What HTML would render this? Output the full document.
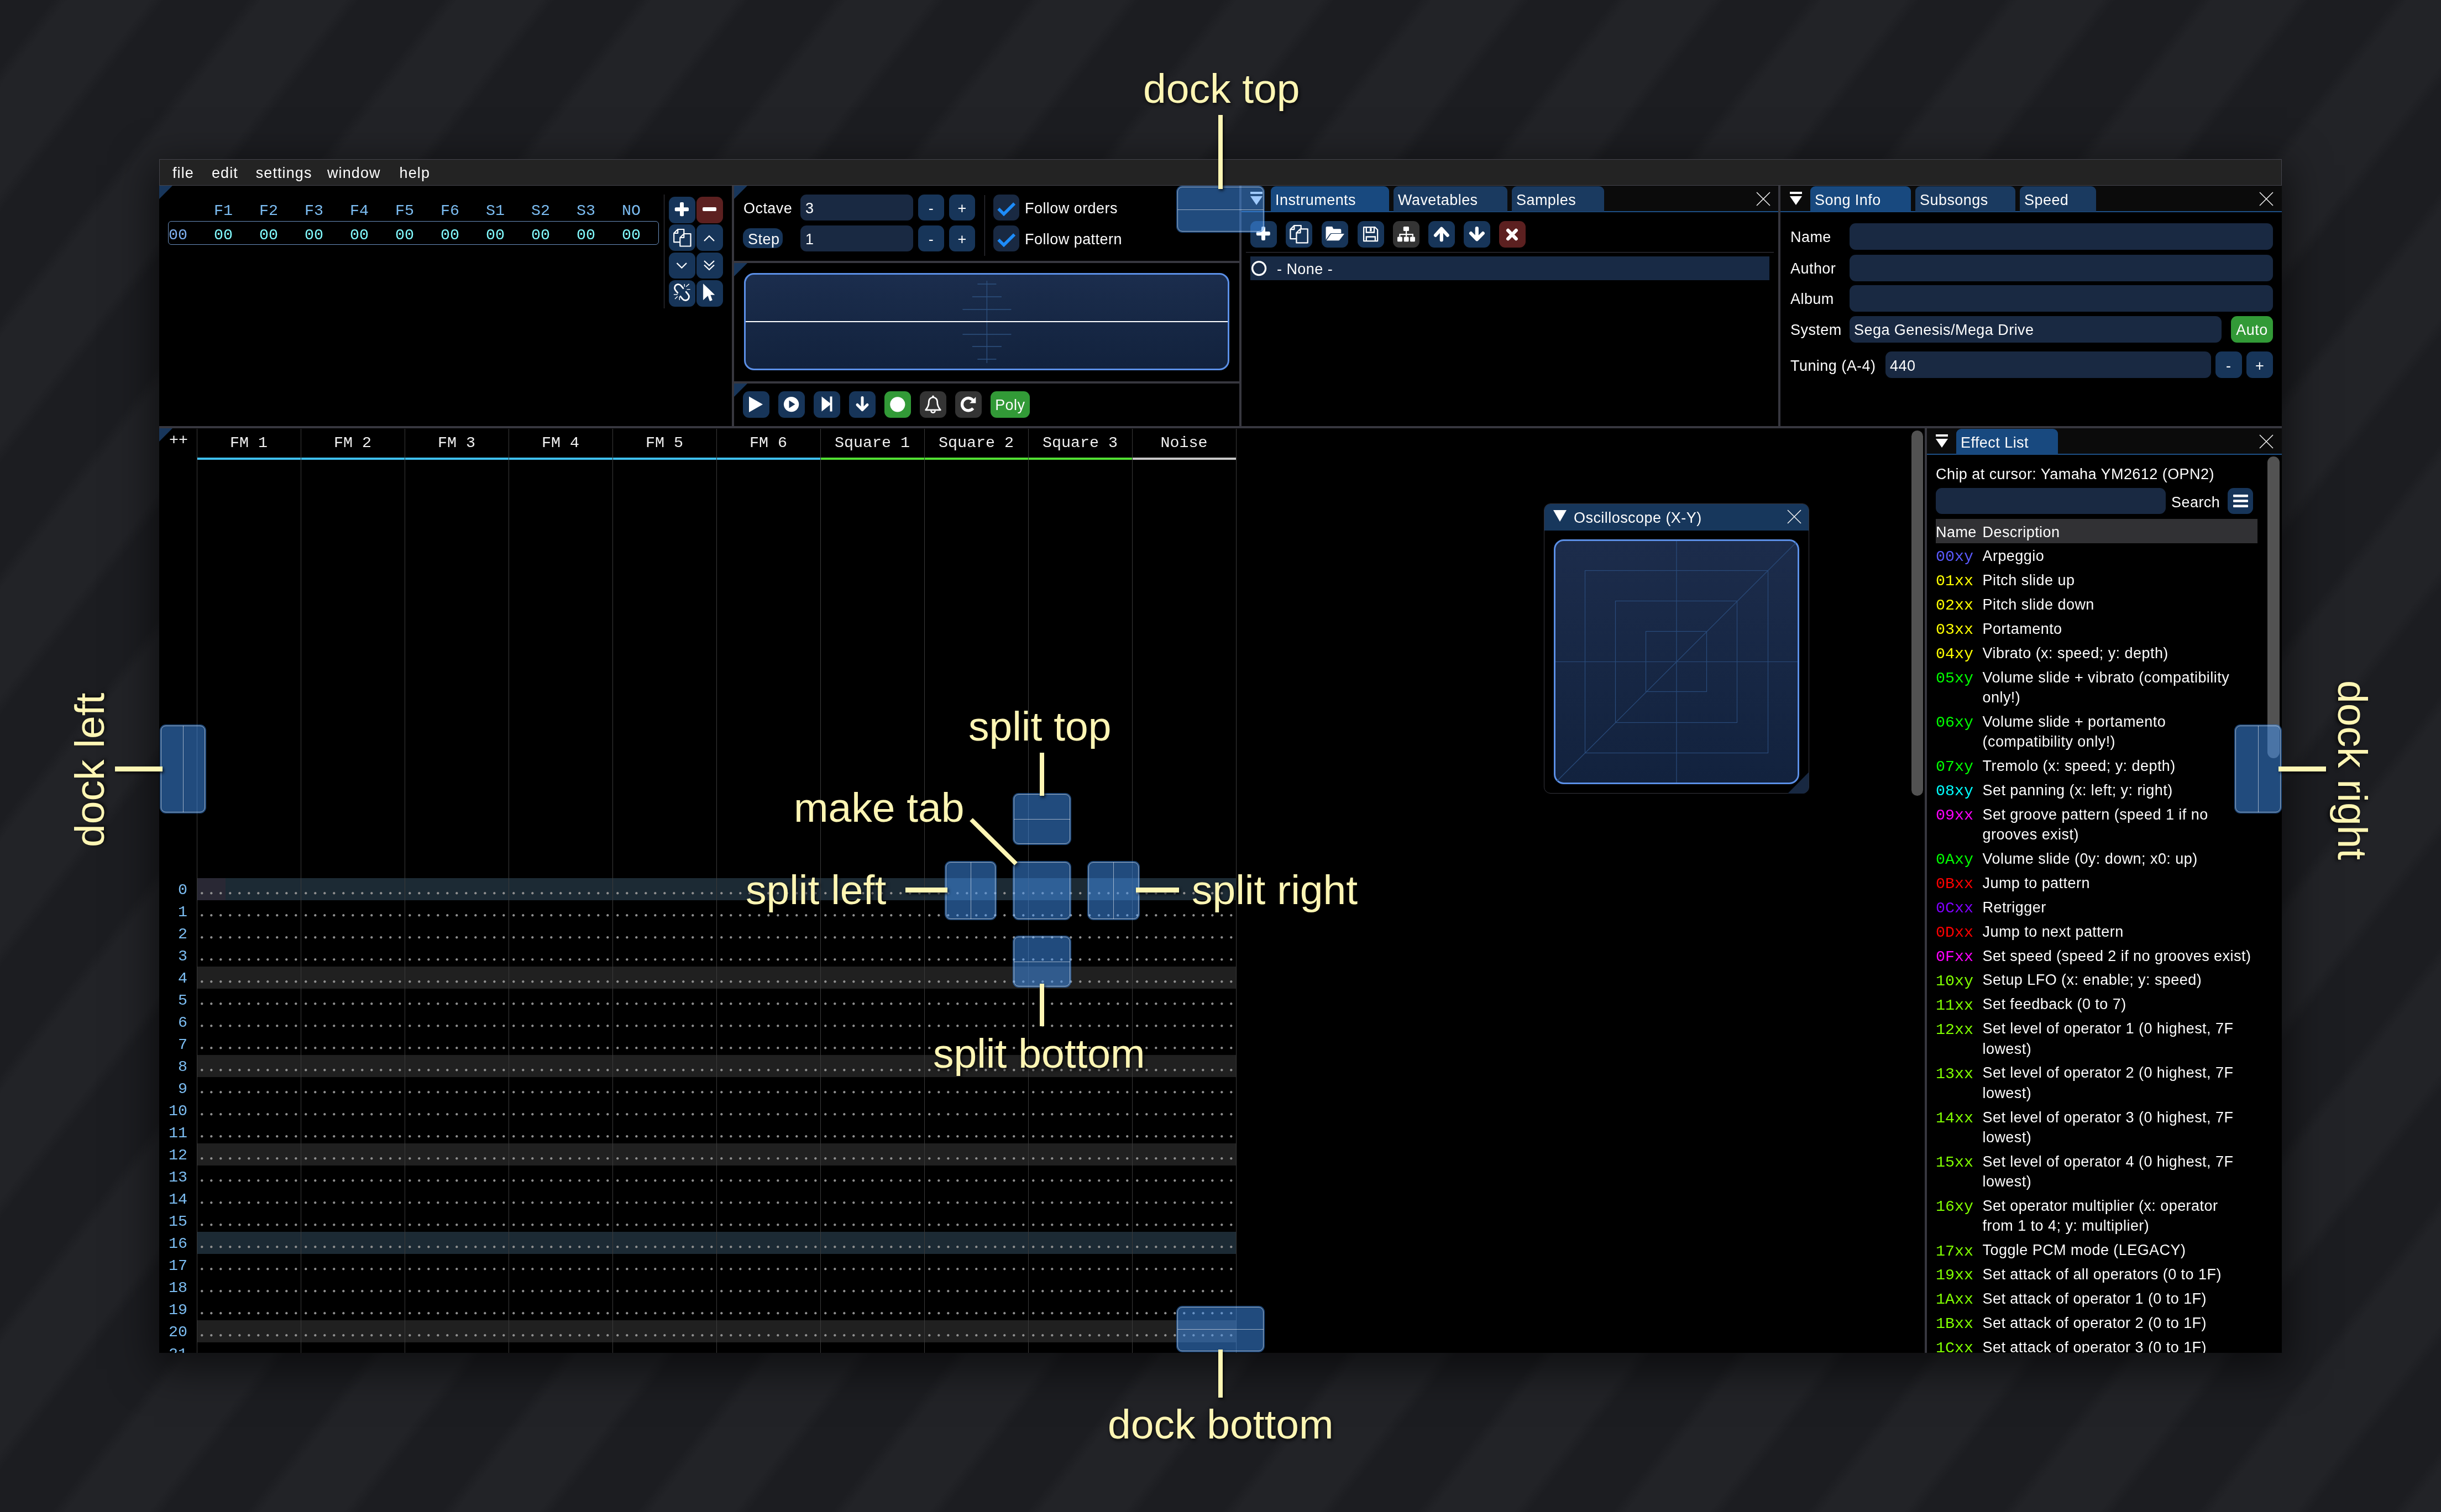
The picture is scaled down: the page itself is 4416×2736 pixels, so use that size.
<!DOCTYPE html><html><head><meta charset="utf-8"><style>
html,body{margin:0;padding:0;width:4416px;height:2736px;overflow:hidden;}
body{position:relative;background:#1e1f23;}
#root{position:absolute;left:0;top:0;width:4416px;height:2736px;will-change:transform;}
</style></head><body><div id="root">
<div style="position:absolute;left:0;top:0;width:4416px;height:2736px;background:repeating-linear-gradient(127.77deg,#1c1d21 0px,#1c1d21 74.4px,#222327 96.4px,#222327 213.5px,#1c1d21 235.5px,#1c1d21 279.0px);"></div>
<div style="position:absolute;left:288px;top:288px;width:3840px;height:2160px;background:#000;box-shadow:0 20px 70px 10px rgba(0,0,0,0.55);"></div>
<div style="position:absolute;left:288px;top:288px;width:3840px;height:48px;background:#232323;box-sizing:border-box;border:1px solid #44444c;border-bottom:1px solid #44444c;"></div>
<div style="position:absolute;left:312px;top:300.05px;font-family:'Liberation Sans', sans-serif;font-size:27px;line-height:27px;color:#fcfcfc;white-space:pre;letter-spacing:1.1px;">file</div>
<div style="position:absolute;left:383px;top:300.05px;font-family:'Liberation Sans', sans-serif;font-size:27px;line-height:27px;color:#fcfcfc;white-space:pre;letter-spacing:1.1px;">edit</div>
<div style="position:absolute;left:462.7px;top:300.05px;font-family:'Liberation Sans', sans-serif;font-size:27px;line-height:27px;color:#fcfcfc;white-space:pre;letter-spacing:1.1px;">settings</div>
<div style="position:absolute;left:592px;top:300.05px;font-family:'Liberation Sans', sans-serif;font-size:27px;line-height:27px;color:#fcfcfc;white-space:pre;letter-spacing:1.1px;">window</div>
<div style="position:absolute;left:722.6px;top:300.05px;font-family:'Liberation Sans', sans-serif;font-size:27px;line-height:27px;color:#fcfcfc;white-space:pre;letter-spacing:1.1px;">help</div>
<div style="position:absolute;left:288px;top:771px;width:3840px;height:4px;background:#37373f;"></div>
<div style="position:absolute;left:1324px;top:336px;width:4px;height:435px;background:#37373f;"></div>
<div style="position:absolute;left:2242px;top:336px;width:4px;height:435px;background:#37373f;"></div>
<div style="position:absolute;left:3217px;top:336px;width:4px;height:435px;background:#37373f;"></div>
<div style="position:absolute;left:1328px;top:472px;width:914px;height:4px;background:#37373f;"></div>
<div style="position:absolute;left:1328px;top:690px;width:914px;height:4px;background:#37373f;"></div>
<div style="position:absolute;left:3482px;top:775px;width:4px;height:1673px;background:#37373f;"></div>
<svg style="position:absolute;left:288px;top:336px;" width="24" height="24" viewBox="0 0 24 24"><path d="M0 0H24L0 24Z" fill="#18365b"/></svg>
<svg style="position:absolute;left:1328px;top:336px;" width="24" height="24" viewBox="0 0 24 24"><path d="M0 0H24L0 24Z" fill="#18365b"/></svg>
<svg style="position:absolute;left:1328px;top:476px;" width="24" height="24" viewBox="0 0 24 24"><path d="M0 0H24L0 24Z" fill="#18365b"/></svg>
<svg style="position:absolute;left:1328px;top:694px;" width="24" height="24" viewBox="0 0 24 24"><path d="M0 0H24L0 24Z" fill="#18365b"/></svg>
<svg style="position:absolute;left:288px;top:775px;" width="24" height="24" viewBox="0 0 24 24"><path d="M0 0H24L0 24Z" fill="#18365b"/></svg>
<div style="position:absolute;left:304.4px;top:400.3px;width:888px;height:43px;box-sizing:border-box;border:1.5px solid #6a8fbf;border-radius:6px;"></div>
<div style="position:absolute;left:305px;top:411.70px;font-family:'Liberation Mono', monospace;font-size:28.33px;line-height:28.33px;color:#7fb0f0;white-space:pre;">00</div>
<div style="position:absolute;left:387px;top:367.70px;font-family:'Liberation Mono', monospace;font-size:28.33px;line-height:28.33px;color:#7cbdf2;white-space:pre;">F1</div>
<div style="position:absolute;left:387px;top:411.70px;font-family:'Liberation Mono', monospace;font-size:28.33px;line-height:28.33px;color:#82fbff;white-space:pre;">00</div>
<div style="position:absolute;left:469px;top:367.70px;font-family:'Liberation Mono', monospace;font-size:28.33px;line-height:28.33px;color:#7cbdf2;white-space:pre;">F2</div>
<div style="position:absolute;left:469px;top:411.70px;font-family:'Liberation Mono', monospace;font-size:28.33px;line-height:28.33px;color:#82fbff;white-space:pre;">00</div>
<div style="position:absolute;left:551px;top:367.70px;font-family:'Liberation Mono', monospace;font-size:28.33px;line-height:28.33px;color:#7cbdf2;white-space:pre;">F3</div>
<div style="position:absolute;left:551px;top:411.70px;font-family:'Liberation Mono', monospace;font-size:28.33px;line-height:28.33px;color:#82fbff;white-space:pre;">00</div>
<div style="position:absolute;left:633px;top:367.70px;font-family:'Liberation Mono', monospace;font-size:28.33px;line-height:28.33px;color:#7cbdf2;white-space:pre;">F4</div>
<div style="position:absolute;left:633px;top:411.70px;font-family:'Liberation Mono', monospace;font-size:28.33px;line-height:28.33px;color:#82fbff;white-space:pre;">00</div>
<div style="position:absolute;left:715px;top:367.70px;font-family:'Liberation Mono', monospace;font-size:28.33px;line-height:28.33px;color:#7cbdf2;white-space:pre;">F5</div>
<div style="position:absolute;left:715px;top:411.70px;font-family:'Liberation Mono', monospace;font-size:28.33px;line-height:28.33px;color:#82fbff;white-space:pre;">00</div>
<div style="position:absolute;left:797px;top:367.70px;font-family:'Liberation Mono', monospace;font-size:28.33px;line-height:28.33px;color:#7cbdf2;white-space:pre;">F6</div>
<div style="position:absolute;left:797px;top:411.70px;font-family:'Liberation Mono', monospace;font-size:28.33px;line-height:28.33px;color:#82fbff;white-space:pre;">00</div>
<div style="position:absolute;left:879px;top:367.70px;font-family:'Liberation Mono', monospace;font-size:28.33px;line-height:28.33px;color:#7cbdf2;white-space:pre;">S1</div>
<div style="position:absolute;left:879px;top:411.70px;font-family:'Liberation Mono', monospace;font-size:28.33px;line-height:28.33px;color:#82fbff;white-space:pre;">00</div>
<div style="position:absolute;left:961px;top:367.70px;font-family:'Liberation Mono', monospace;font-size:28.33px;line-height:28.33px;color:#7cbdf2;white-space:pre;">S2</div>
<div style="position:absolute;left:961px;top:411.70px;font-family:'Liberation Mono', monospace;font-size:28.33px;line-height:28.33px;color:#82fbff;white-space:pre;">00</div>
<div style="position:absolute;left:1043px;top:367.70px;font-family:'Liberation Mono', monospace;font-size:28.33px;line-height:28.33px;color:#7cbdf2;white-space:pre;">S3</div>
<div style="position:absolute;left:1043px;top:411.70px;font-family:'Liberation Mono', monospace;font-size:28.33px;line-height:28.33px;color:#82fbff;white-space:pre;">00</div>
<div style="position:absolute;left:1125px;top:367.70px;font-family:'Liberation Mono', monospace;font-size:28.33px;line-height:28.33px;color:#7cbdf2;white-space:pre;">NO</div>
<div style="position:absolute;left:1125px;top:411.70px;font-family:'Liberation Mono', monospace;font-size:28.33px;line-height:28.33px;color:#82fbff;white-space:pre;">00</div>
<div style="position:absolute;left:1201px;top:352px;width:1px;height:206px;background:#3c3c44;"></div>
<div style="position:absolute;left:1210px;top:356px;width:47.5px;height:47.5px;background:#173559;border-radius:11px;"></div>
<div style="position:absolute;left:1260px;top:356px;width:47.5px;height:47.5px;background:#5c2020;border-radius:11px;"></div>
<div style="position:absolute;left:1210px;top:406px;width:47.5px;height:47.5px;background:#173559;border-radius:11px;"></div>
<div style="position:absolute;left:1260px;top:406px;width:47.5px;height:47.5px;background:#173559;border-radius:11px;"></div>
<div style="position:absolute;left:1210px;top:456.5px;width:47.5px;height:47.5px;background:#173559;border-radius:11px;"></div>
<div style="position:absolute;left:1260px;top:456.5px;width:47.5px;height:47.5px;background:#173559;border-radius:11px;"></div>
<div style="position:absolute;left:1210px;top:507px;width:47.5px;height:47.5px;background:#173559;border-radius:11px;"></div>
<div style="position:absolute;left:1260px;top:507px;width:47.5px;height:47.5px;background:#173559;border-radius:11px;"></div>
<svg style="position:absolute;left:1210px;top:356px;" width="48" height="48" viewBox="0 0 48 48"><rect x="10.8" y="19.2" width="25.2" height="7" rx="2" fill="#fff"/><rect x="20" y="10" width="7" height="25.2" rx="2" fill="#fff"/></svg>
<svg style="position:absolute;left:1260px;top:356px;" width="48" height="48" viewBox="0 0 48 48"><rect x="11" y="19" width="25" height="7" rx="2" fill="#fff"/></svg>
<svg style="position:absolute;left:1210px;top:406px;" width="48" height="48" viewBox="0 0 48 48"><path d="M9.2 16L16.2 9H27.3V17 M20.3 32.2H9.2V16H16.2V9" fill="none" stroke="#fff" stroke-width="2.2" stroke-linejoin="round"/><path d="M20.3 24L27.3 17H39.5V39.5H20.3Z M20.3 24H27.3V17" fill="none" stroke="#fff" stroke-width="2.2" stroke-linejoin="round"/></svg>
<svg style="position:absolute;left:1260px;top:406px;" width="48" height="48" viewBox="0 0 48 48"><path d="M14 30L23 21L32 30" fill="none" stroke="#fff" stroke-width="2.2"/></svg>
<svg style="position:absolute;left:1210px;top:456.5px;" width="48" height="48" viewBox="0 0 48 48"><path d="M14.5 19L23.3 27.8L32 19" fill="none" stroke="#fff" stroke-width="2.2"/></svg>
<svg style="position:absolute;left:1260px;top:456.5px;" width="48" height="48" viewBox="0 0 48 48"><path d="M14 15L23 23.5L32 15 M14 22.5L23 31L32 22.5" fill="none" stroke="#fff" stroke-width="2.2"/></svg>
<svg style="position:absolute;left:1210px;top:507px;" width="48" height="48" viewBox="0 0 48 48"><path d="M15.85 22.9L11.95 18.1A6.5 6.5 0 0 1 22.05 9.9L25.95 14.7 M31.15 21.1L35.05 25.9A6.5 6.5 0 0 1 24.95 34.1L21.05 29.3" fill="none" stroke="#fff" stroke-width="2.8" stroke-linecap="round"/><path d="M28.3 6.9V11.8 M31.1 11.8L36.7 6.9 M32.5 16.6H38.7 M8.9 26H15.8 M11 34L15.8 29.2 M19.3 29.7V36" stroke="#fff" stroke-width="1.4"/></svg>
<svg style="position:absolute;left:1260px;top:507px;" width="48" height="48" viewBox="0 0 48 48"><path d="M12.4 6.9V35.4L20.7 27.7L24.2 37.4L28.3 36L24.9 26.3H32.5Z" fill="#fff" stroke="#fff" stroke-width="0.8" stroke-linejoin="round"/></svg>
<div style="position:absolute;left:1345px;top:364.35px;font-family:'Liberation Sans', sans-serif;font-size:27px;line-height:27px;color:#fcfcfc;white-space:pre;letter-spacing:0.45px;">Octave</div>
<div style="position:absolute;left:1448px;top:352px;width:204px;height:47px;background:#192942;border-radius:11px;"></div>
<div style="position:absolute;left:1457px;top:364.35px;font-family:'Liberation Sans', sans-serif;font-size:27px;line-height:27px;color:#fcfcfc;white-space:pre;letter-spacing:0.45px;">3</div>
<div style="position:absolute;left:1661px;top:352px;width:47px;height:47px;background:#173559;border-radius:11px;"></div>
<div style="position:absolute;left:1184.5px;width:1000px;text-align:center;top:364.35px;font-family:'Liberation Sans', sans-serif;font-size:27px;line-height:27px;color:#fcfcfc;white-space:pre;letter-spacing:0.45px;">-</div>
<div style="position:absolute;left:1717px;top:352px;width:47px;height:47px;background:#173559;border-radius:11px;"></div>
<div style="position:absolute;left:1240.5px;width:1000px;text-align:center;top:364.35px;font-family:'Liberation Sans', sans-serif;font-size:27px;line-height:27px;color:#fcfcfc;white-space:pre;letter-spacing:0.45px;">+</div>
<div style="position:absolute;left:1344px;top:413px;width:72px;height:36px;background:#173559;border-radius:14px;"></div>
<div style="position:absolute;left:1353px;top:420.45px;font-family:'Liberation Sans', sans-serif;font-size:27px;line-height:27px;color:#fcfcfc;white-space:pre;letter-spacing:0.45px;">Step</div>
<div style="position:absolute;left:1448px;top:408px;width:204px;height:47px;background:#192942;border-radius:11px;"></div>
<div style="position:absolute;left:1457px;top:420.45px;font-family:'Liberation Sans', sans-serif;font-size:27px;line-height:27px;color:#fcfcfc;white-space:pre;letter-spacing:0.45px;">1</div>
<div style="position:absolute;left:1661px;top:408px;width:47px;height:47px;background:#173559;border-radius:11px;"></div>
<div style="position:absolute;left:1184.5px;width:1000px;text-align:center;top:420.45px;font-family:'Liberation Sans', sans-serif;font-size:27px;line-height:27px;color:#fcfcfc;white-space:pre;letter-spacing:0.45px;">-</div>
<div style="position:absolute;left:1717px;top:408px;width:47px;height:47px;background:#173559;border-radius:11px;"></div>
<div style="position:absolute;left:1240.5px;width:1000px;text-align:center;top:420.45px;font-family:'Liberation Sans', sans-serif;font-size:27px;line-height:27px;color:#fcfcfc;white-space:pre;letter-spacing:0.45px;">+</div>
<div style="position:absolute;left:1781px;top:353px;width:1px;height:110px;background:#3c3c44;"></div>
<div style="position:absolute;left:1797px;top:352px;width:47px;height:47px;background:#192942;border-radius:11px;"></div>
<svg style="position:absolute;left:1797px;top:352px;" width="47" height="47" viewBox="0 0 47 47"><path d="M9.3 25.8L19 35.3L38.2 16.2" fill="none" stroke="#1d8cfa" stroke-width="5.6" stroke-linecap="butt"/></svg>
<div style="position:absolute;left:1854px;top:364.35px;font-family:'Liberation Sans', sans-serif;font-size:27px;line-height:27px;color:#fcfcfc;white-space:pre;letter-spacing:0.45px;">Follow orders</div>
<div style="position:absolute;left:1797px;top:408px;width:47px;height:47px;background:#192942;border-radius:11px;"></div>
<svg style="position:absolute;left:1797px;top:408px;" width="47" height="47" viewBox="0 0 47 47"><path d="M9.3 25.8L19 35.3L38.2 16.2" fill="none" stroke="#1d8cfa" stroke-width="5.6" stroke-linecap="butt"/></svg>
<div style="position:absolute;left:1854px;top:420.35px;font-family:'Liberation Sans', sans-serif;font-size:27px;line-height:27px;color:#fcfcfc;white-space:pre;letter-spacing:0.45px;">Follow pattern</div>
<div style="position:absolute;left:1346px;top:494px;width:878px;height:176px;box-sizing:border-box;border:3px solid #5b8fe6;border-radius:18px;background:linear-gradient(#1b2d4d,#12223d);"></div>
<svg style="position:absolute;left:1346px;top:494px;" width="878" height="176" viewBox="0 0 878 176"><g stroke="#2e5180" stroke-width="1.3"><path d="M439.4 14V163"/><path d="M422.4 20h34M412.9 43h53M395.4 66h88M395.4 111h88M412.9 133h53M422.4 156h34"/></g><path d="M3 88H875" stroke="#fff" stroke-width="2"/></svg>
<div style="position:absolute;left:1344px;top:708px;width:47.5px;height:47.5px;background:#173559;border-radius:11px;"></div>
<div style="position:absolute;left:1408px;top:708px;width:47.5px;height:47.5px;background:#173559;border-radius:11px;"></div>
<div style="position:absolute;left:1472.4px;top:708px;width:47.5px;height:47.5px;background:#173559;border-radius:11px;"></div>
<div style="position:absolute;left:1536px;top:708px;width:47.5px;height:47.5px;background:#173559;border-radius:11px;"></div>
<div style="position:absolute;left:1600px;top:708px;width:47.5px;height:47.5px;background:#329a37;border-radius:11px;"></div>
<div style="position:absolute;left:1664px;top:708px;width:47.5px;height:47.5px;background:#343434;border-radius:11px;"></div>
<div style="position:absolute;left:1728px;top:708px;width:47.5px;height:47.5px;background:#343434;border-radius:11px;"></div>
<div style="position:absolute;left:1792px;top:708px;width:70.5px;height:47.5px;background:#329a37;border-radius:11px;"></div>
<svg style="position:absolute;left:1344px;top:708px;" width="48" height="48" viewBox="0 0 48 48"><path d="M11 9.5v28.5l25-14.2z" fill="#fff"/></svg>
<svg style="position:absolute;left:1408px;top:708px;" width="48" height="48" viewBox="0 0 48 48"><circle cx="23.6" cy="23.6" r="13.7" fill="#fff"/><path d="M19.5 16.5v14l11-7z" fill="#1a3559"/></svg>
<svg style="position:absolute;left:1472.4px;top:708px;" width="48" height="48" viewBox="0 0 48 48"><path d="M14.5 9.5v27l17-13.5z" fill="#fff"/><rect x="29.5" y="9.5" width="4" height="27" fill="#fff"/></svg>
<svg style="position:absolute;left:1536px;top:708px;" width="48" height="48" viewBox="0 0 48 48"><path d="M24 11.5v22 M15 24.5l9 9 9-9" fill="none" stroke="#fff" stroke-width="5" stroke-linecap="round" stroke-linejoin="round"/></svg>
<svg style="position:absolute;left:1600px;top:708px;" width="48" height="48" viewBox="0 0 48 48"><circle cx="23.8" cy="23.8" r="13.6" fill="#fff"/></svg>
<svg style="position:absolute;left:1664px;top:708px;" width="48" height="48" viewBox="0 0 48 48"><path d="M10.6 33.8C14.2 29.6 16.3 26 16.3 20V18.7A7.7 7.7 0 0 1 31.7 18.7V20C31.7 26 33.8 29.6 37.4 33.8Z" fill="none" stroke="#fff" stroke-width="2.7" stroke-linejoin="round"/><circle cx="24" cy="9.4" r="1.9" fill="#fff"/><path d="M20.4 35.2A3.6 3.6 0 0 0 27.6 35.2" fill="none" stroke="#fff" stroke-width="2.6"/></svg>
<svg style="position:absolute;left:1728px;top:708px;" width="48" height="48" viewBox="0 0 48 48"><path d="M32.37 30.88A11.25 11.25 0 1 1 32.37 16.42" fill="none" stroke="#fff" stroke-width="5.2"/><path d="M37.3 10.3V21.4H26.2Z" fill="#fff"/></svg>
<div style="position:absolute;left:1327.3px;width:1000px;text-align:center;top:720.35px;font-family:'Liberation Sans', sans-serif;font-size:27px;line-height:27px;color:#fcfcfc;white-space:pre;letter-spacing:0.45px;">Poly</div>
<div style="position:absolute;left:2246px;top:336px;width:971px;height:47px;background:#0b0b0b;"></div>
<div style="position:absolute;left:2246px;top:382px;width:971px;height:1.5px;background:#1d4f86;"></div>
<div style="position:absolute;left:2299px;top:337px;width:214px;height:46px;background:#18497f;border-radius:9px 9px 0 0;"></div>
<div style="position:absolute;left:2307px;top:349.05px;font-family:'Liberation Sans', sans-serif;font-size:27px;line-height:27px;color:#fcfcfc;white-space:pre;letter-spacing:0.45px;">Instruments</div>
<div style="position:absolute;left:2521px;top:337px;width:206px;height:46px;background:#1a3a60;border-radius:9px 9px 0 0;"></div>
<div style="position:absolute;left:2529px;top:349.05px;font-family:'Liberation Sans', sans-serif;font-size:27px;line-height:27px;color:#fcfcfc;white-space:pre;letter-spacing:0.45px;">Wavetables</div>
<div style="position:absolute;left:2735px;top:337px;width:167px;height:46px;background:#1a3a60;border-radius:9px 9px 0 0;"></div>
<div style="position:absolute;left:2743px;top:349.05px;font-family:'Liberation Sans', sans-serif;font-size:27px;line-height:27px;color:#fcfcfc;white-space:pre;letter-spacing:0.45px;">Samples</div>
<svg style="position:absolute;left:3177px;top:347px;" width="26" height="26" viewBox="0 0 26 26"><path d="M1 1L25 25M25 1L1 25" stroke="#f0f0f0" stroke-width="1.6"/></svg>
<svg style="position:absolute;left:2262px;top:347px;" width="24" height="26" viewBox="0 0 24 26"><rect x="0" y="0" width="22" height="4" fill="#fff"/><path d="M0 8h22L11 24z" fill="#fff"/></svg>
<div style="position:absolute;left:2262px;top:400px;width:48px;height:47.5px;background:#173559;border-radius:11px;"></div>
<div style="position:absolute;left:2326px;top:400px;width:48px;height:47.5px;background:#173559;border-radius:11px;"></div>
<div style="position:absolute;left:2390.5px;top:400px;width:48px;height:47.5px;background:#173559;border-radius:11px;"></div>
<div style="position:absolute;left:2456px;top:400px;width:48px;height:47.5px;background:#173559;border-radius:11px;"></div>
<div style="position:absolute;left:2520px;top:400px;width:48px;height:47.5px;background:#343434;border-radius:11px;"></div>
<div style="position:absolute;left:2584px;top:400px;width:48px;height:47.5px;background:#173559;border-radius:11px;"></div>
<div style="position:absolute;left:2648px;top:400px;width:48px;height:47.5px;background:#173559;border-radius:11px;"></div>
<div style="position:absolute;left:2712px;top:400px;width:48px;height:47.5px;background:#5c2020;border-radius:11px;"></div>
<svg style="position:absolute;left:2262px;top:400px;" width="48" height="48" viewBox="0 0 48 48"><rect x="10.8" y="19" width="25" height="7.3" rx="2.2" fill="#fff"/><rect x="20" y="10.1" width="7" height="24.8" rx="2.2" fill="#fff"/></svg>
<svg style="position:absolute;left:2326px;top:400px;" width="48" height="48" viewBox="0 0 48 48"><path d="M8.4 15.1L15.4 8.1H27.7V14.3 M19.4 32.1H8.4V15.1H15.4V8.1" fill="none" stroke="#fff" stroke-width="2.3" stroke-linejoin="round"/><path d="M19.4 21.3L26.4 14.3H39.7V39.4H19.4Z M19.4 21.3H26.4V14.3" fill="none" stroke="#fff" stroke-width="2.3" stroke-linejoin="round"/></svg>
<svg style="position:absolute;left:2390.5px;top:400px;" width="50" height="48" viewBox="0 0 50 48"><path d="M7.6 34V12.1a2 2 0 0 1 2-2h9.6l2 4.2h12.1a2 2 0 0 1 2 2V22H17.5a3 3 0 0 0-2.6 1.5L7.6 34Z" fill="#fff"/><path d="M8.6 35.2L16.3 24.3a3 3 0 0 1 2.4-1.2H41L33 33.6a3 3 0 0 1-2.4 1.6Z" fill="#fff"/></svg>
<svg style="position:absolute;left:2456px;top:400px;" width="48" height="48" viewBox="0 0 48 48"><path d="M11.1 11.2H31.5L36.1 15.8V36.2H11.1Z" fill="none" stroke="#fff" stroke-width="2.3" stroke-linejoin="round"/><path d="M15.8 11.2V20.5H30V11.2" fill="none" stroke="#fff" stroke-width="2.3"/><rect x="22" y="12.5" width="3.6" height="6" fill="#fff"/><path d="M15.8 36.2V28.5H31.9V36.2" fill="none" stroke="#fff" stroke-width="2.3"/></svg>
<svg style="position:absolute;left:2520px;top:400px;" width="48" height="48" viewBox="0 0 48 48"><rect x="18.8" y="9.9" width="10.2" height="8.1" rx="1.6" fill="#fff"/><rect x="8" y="28.4" width="8.9" height="8.9" rx="1.6" fill="#fff"/><rect x="19.8" y="28.4" width="8.8" height="8.9" rx="1.6" fill="#fff"/><rect x="31" y="28.4" width="8.9" height="8.9" rx="1.6" fill="#fff"/><path d="M24.1 18V28.4 M12.4 28.4V24.2H35.8V28.4" fill="none" stroke="#fff" stroke-width="2.2"/></svg>
<svg style="position:absolute;left:2584px;top:400px;" width="48" height="48" viewBox="0 0 48 48"><path d="M23.8 34.2V14 M13 25.8L23.8 13.7L34.7 25.8" fill="none" stroke="#fff" stroke-width="6.2" stroke-linecap="round" stroke-linejoin="round"/></svg>
<svg style="position:absolute;left:2648px;top:400px;" width="48" height="48" viewBox="0 0 48 48"><path d="M23.8 13.2V33 M13 22.1L23.8 33.2L34.8 22.1" fill="none" stroke="#fff" stroke-width="6.2" stroke-linecap="round" stroke-linejoin="round"/></svg>
<svg style="position:absolute;left:2712px;top:400px;" width="48" height="48" viewBox="0 0 48 48"><path d="M16.1 16.9L30.8 32.1 M30.8 16.9L16.1 32.1" fill="none" stroke="#fff" stroke-width="6.3" stroke-linecap="round"/></svg>
<div style="position:absolute;left:2254px;top:456px;width:955px;height:1px;background:#3a3a44;"></div>
<div style="position:absolute;left:2262px;top:464px;width:939px;height:43px;background:#182a45;"></div>
<svg style="position:absolute;left:2262px;top:464px;" width="40" height="43" viewBox="0 0 40 43"><circle cx="15.6" cy="21.6" r="12" fill="none" stroke="#fff" stroke-width="3.3"/></svg>
<div style="position:absolute;left:2310px;top:474.05px;font-family:'Liberation Sans', sans-serif;font-size:27px;line-height:27px;color:#fcfcfc;white-space:pre;letter-spacing:0.45px;">- None -</div>
<div style="position:absolute;left:3221px;top:336px;width:907px;height:47px;background:#0b0b0b;"></div>
<div style="position:absolute;left:3221px;top:382px;width:907px;height:1.5px;background:#1d4f86;"></div>
<div style="position:absolute;left:3275px;top:337px;width:182px;height:46px;background:#18497f;border-radius:9px 9px 0 0;"></div>
<div style="position:absolute;left:3283px;top:349.05px;font-family:'Liberation Sans', sans-serif;font-size:27px;line-height:27px;color:#fcfcfc;white-space:pre;letter-spacing:0.45px;">Song Info</div>
<div style="position:absolute;left:3465px;top:337px;width:181px;height:46px;background:#1a3a60;border-radius:9px 9px 0 0;"></div>
<div style="position:absolute;left:3473px;top:349.05px;font-family:'Liberation Sans', sans-serif;font-size:27px;line-height:27px;color:#fcfcfc;white-space:pre;letter-spacing:0.45px;">Subsongs</div>
<div style="position:absolute;left:3654px;top:337px;width:138px;height:46px;background:#1a3a60;border-radius:9px 9px 0 0;"></div>
<div style="position:absolute;left:3662px;top:349.05px;font-family:'Liberation Sans', sans-serif;font-size:27px;line-height:27px;color:#fcfcfc;white-space:pre;letter-spacing:0.45px;">Speed</div>
<svg style="position:absolute;left:4087px;top:347px;" width="26" height="26" viewBox="0 0 26 26"><path d="M1 1L25 25M25 1L1 25" stroke="#f0f0f0" stroke-width="1.6"/></svg>
<svg style="position:absolute;left:3238px;top:347px;" width="24" height="26" viewBox="0 0 24 26"><rect x="0" y="0" width="22" height="4" fill="#fff"/><path d="M0 8h22L11 24z" fill="#fff"/></svg>
<div style="position:absolute;left:3239px;top:416.35px;font-family:'Liberation Sans', sans-serif;font-size:27px;line-height:27px;color:#fcfcfc;white-space:pre;letter-spacing:0.45px;">Name</div>
<div style="position:absolute;left:3346px;top:404px;width:766px;height:47.5px;background:#192942;border-radius:11px;"></div>
<div style="position:absolute;left:3239px;top:473.35px;font-family:'Liberation Sans', sans-serif;font-size:27px;line-height:27px;color:#fcfcfc;white-space:pre;letter-spacing:0.45px;">Author</div>
<div style="position:absolute;left:3346px;top:461px;width:766px;height:47.5px;background:#192942;border-radius:11px;"></div>
<div style="position:absolute;left:3239px;top:528.35px;font-family:'Liberation Sans', sans-serif;font-size:27px;line-height:27px;color:#fcfcfc;white-space:pre;letter-spacing:0.45px;">Album</div>
<div style="position:absolute;left:3346px;top:516px;width:766px;height:47.5px;background:#192942;border-radius:11px;"></div>
<div style="position:absolute;left:3239px;top:584.35px;font-family:'Liberation Sans', sans-serif;font-size:27px;line-height:27px;color:#fcfcfc;white-space:pre;letter-spacing:0.45px;">System</div>
<div style="position:absolute;left:3346px;top:572px;width:673px;height:48px;background:#192942;border-radius:11px;"></div>
<div style="position:absolute;left:3354px;top:584.35px;font-family:'Liberation Sans', sans-serif;font-size:27px;line-height:27px;color:#fcfcfc;white-space:pre;letter-spacing:0.45px;">Sega Genesis/Mega Drive</div>
<div style="position:absolute;left:4036px;top:572px;width:76px;height:48px;background:#329a37;border-radius:11px;"></div>
<div style="position:absolute;left:3574px;width:1000px;text-align:center;top:584.35px;font-family:'Liberation Sans', sans-serif;font-size:27px;line-height:27px;color:#fcfcfc;white-space:pre;letter-spacing:0.45px;">Auto</div>
<div style="position:absolute;left:3239px;top:648.55px;font-family:'Liberation Sans', sans-serif;font-size:27px;line-height:27px;color:#fcfcfc;white-space:pre;letter-spacing:0.45px;">Tuning (A-4)</div>
<div style="position:absolute;left:3411px;top:636px;width:589px;height:48px;background:#192942;border-radius:11px;"></div>
<div style="position:absolute;left:3419px;top:648.55px;font-family:'Liberation Sans', sans-serif;font-size:27px;line-height:27px;color:#fcfcfc;white-space:pre;letter-spacing:0.45px;">440</div>
<div style="position:absolute;left:4008px;top:636px;width:47.5px;height:48px;background:#173559;border-radius:11px;"></div>
<div style="position:absolute;left:3531.7px;width:1000px;text-align:center;top:648.55px;font-family:'Liberation Sans', sans-serif;font-size:27px;line-height:27px;color:#fcfcfc;white-space:pre;letter-spacing:0.45px;">-</div>
<div style="position:absolute;left:4064px;top:636px;width:48px;height:48px;background:#173559;border-radius:11px;"></div>
<div style="position:absolute;left:3588px;width:1000px;text-align:center;top:648.55px;font-family:'Liberation Sans', sans-serif;font-size:27px;line-height:27px;color:#fcfcfc;white-space:pre;letter-spacing:0.45px;">+</div>
<div style="position:absolute;left:0;top:0;width:4416px;height:2448px;overflow:hidden;">
<div style="position:absolute;left:356px;top:1589px;width:1880px;height:40px;background:#1c2a34;"></div>
<div style="position:absolute;left:356px;top:1749px;width:1880px;height:40px;background:#202020;"></div>
<div style="position:absolute;left:356px;top:1909px;width:1880px;height:40px;background:#202020;"></div>
<div style="position:absolute;left:356px;top:2069px;width:1880px;height:40px;background:#202020;"></div>
<div style="position:absolute;left:356px;top:2229px;width:1880px;height:40px;background:#1c2a34;"></div>
<div style="position:absolute;left:356px;top:2389px;width:1880px;height:40px;background:#202020;"></div>
<div style="position:absolute;left:357px;top:1589px;width:51px;height:40px;background:#292834;"></div>
<div style="position:absolute;left:356px;top:776px;width:1px;height:1672px;background:#3a3a3a;"></div>
<div style="position:absolute;left:544px;top:776px;width:1px;height:1672px;background:#3a3a3a;"></div>
<div style="position:absolute;left:732px;top:776px;width:1px;height:1672px;background:#3a3a3a;"></div>
<div style="position:absolute;left:920px;top:776px;width:1px;height:1672px;background:#3a3a3a;"></div>
<div style="position:absolute;left:1108px;top:776px;width:1px;height:1672px;background:#3a3a3a;"></div>
<div style="position:absolute;left:1296px;top:776px;width:1px;height:1672px;background:#3a3a3a;"></div>
<div style="position:absolute;left:1484px;top:776px;width:1px;height:1672px;background:#3a3a3a;"></div>
<div style="position:absolute;left:1672px;top:776px;width:1px;height:1672px;background:#3a3a3a;"></div>
<div style="position:absolute;left:1860px;top:776px;width:1px;height:1672px;background:#3a3a3a;"></div>
<div style="position:absolute;left:2048px;top:776px;width:1px;height:1672px;background:#3a3a3a;"></div>
<div style="position:absolute;left:2236px;top:776px;width:1px;height:1672px;background:#3a3a3a;"></div>
<div style="position:absolute;left:306px;top:783.30px;font-family:'Liberation Mono', monospace;font-size:28.33px;line-height:28.33px;color:#f0f0f0;white-space:pre;">++</div>
<div style="position:absolute;left:-50.0px;width:1000px;text-align:center;top:788.30px;font-family:'Liberation Mono', monospace;font-size:28.33px;line-height:28.33px;color:#f0f0f0;white-space:pre;">FM 1</div>
<div style="position:absolute;left:357px;top:828px;width:187px;height:3.5px;background:#3ec0f2;"></div>
<div style="position:absolute;left:138.0px;width:1000px;text-align:center;top:788.30px;font-family:'Liberation Mono', monospace;font-size:28.33px;line-height:28.33px;color:#f0f0f0;white-space:pre;">FM 2</div>
<div style="position:absolute;left:545px;top:828px;width:187px;height:3.5px;background:#3ec0f2;"></div>
<div style="position:absolute;left:326.0px;width:1000px;text-align:center;top:788.30px;font-family:'Liberation Mono', monospace;font-size:28.33px;line-height:28.33px;color:#f0f0f0;white-space:pre;">FM 3</div>
<div style="position:absolute;left:733px;top:828px;width:187px;height:3.5px;background:#3ec0f2;"></div>
<div style="position:absolute;left:514.0px;width:1000px;text-align:center;top:788.30px;font-family:'Liberation Mono', monospace;font-size:28.33px;line-height:28.33px;color:#f0f0f0;white-space:pre;">FM 4</div>
<div style="position:absolute;left:921px;top:828px;width:187px;height:3.5px;background:#3ec0f2;"></div>
<div style="position:absolute;left:702.0px;width:1000px;text-align:center;top:788.30px;font-family:'Liberation Mono', monospace;font-size:28.33px;line-height:28.33px;color:#f0f0f0;white-space:pre;">FM 5</div>
<div style="position:absolute;left:1109px;top:828px;width:187px;height:3.5px;background:#3ec0f2;"></div>
<div style="position:absolute;left:890.0px;width:1000px;text-align:center;top:788.30px;font-family:'Liberation Mono', monospace;font-size:28.33px;line-height:28.33px;color:#f0f0f0;white-space:pre;">FM 6</div>
<div style="position:absolute;left:1297px;top:828px;width:187px;height:3.5px;background:#3ec0f2;"></div>
<div style="position:absolute;left:1078.0px;width:1000px;text-align:center;top:788.30px;font-family:'Liberation Mono', monospace;font-size:28.33px;line-height:28.33px;color:#f0f0f0;white-space:pre;">Square 1</div>
<div style="position:absolute;left:1485px;top:828px;width:187px;height:3.5px;background:#52e033;"></div>
<div style="position:absolute;left:1266.0px;width:1000px;text-align:center;top:788.30px;font-family:'Liberation Mono', monospace;font-size:28.33px;line-height:28.33px;color:#f0f0f0;white-space:pre;">Square 2</div>
<div style="position:absolute;left:1673px;top:828px;width:187px;height:3.5px;background:#52e033;"></div>
<div style="position:absolute;left:1454.0px;width:1000px;text-align:center;top:788.30px;font-family:'Liberation Mono', monospace;font-size:28.33px;line-height:28.33px;color:#f0f0f0;white-space:pre;">Square 3</div>
<div style="position:absolute;left:1861px;top:828px;width:187px;height:3.5px;background:#52e033;"></div>
<div style="position:absolute;left:1642.0px;width:1000px;text-align:center;top:788.30px;font-family:'Liberation Mono', monospace;font-size:28.33px;line-height:28.33px;color:#f0f0f0;white-space:pre;">Noise</div>
<div style="position:absolute;left:2049px;top:828px;width:187px;height:3.5px;background:#c8c8c8;"></div>
<div style="position:absolute;left:-661px;width:1000px;text-align:right;top:1597.30px;font-family:'Liberation Mono', monospace;font-size:28.33px;line-height:28.33px;color:#7cbdf2;white-space:pre;">0</div>
<div style="position:absolute;left:-661px;width:1000px;text-align:right;top:1637.30px;font-family:'Liberation Mono', monospace;font-size:28.33px;line-height:28.33px;color:#7cbdf2;white-space:pre;">1</div>
<div style="position:absolute;left:-661px;width:1000px;text-align:right;top:1677.30px;font-family:'Liberation Mono', monospace;font-size:28.33px;line-height:28.33px;color:#7cbdf2;white-space:pre;">2</div>
<div style="position:absolute;left:-661px;width:1000px;text-align:right;top:1717.30px;font-family:'Liberation Mono', monospace;font-size:28.33px;line-height:28.33px;color:#7cbdf2;white-space:pre;">3</div>
<div style="position:absolute;left:-661px;width:1000px;text-align:right;top:1757.30px;font-family:'Liberation Mono', monospace;font-size:28.33px;line-height:28.33px;color:#7cbdf2;white-space:pre;">4</div>
<div style="position:absolute;left:-661px;width:1000px;text-align:right;top:1797.30px;font-family:'Liberation Mono', monospace;font-size:28.33px;line-height:28.33px;color:#7cbdf2;white-space:pre;">5</div>
<div style="position:absolute;left:-661px;width:1000px;text-align:right;top:1837.30px;font-family:'Liberation Mono', monospace;font-size:28.33px;line-height:28.33px;color:#7cbdf2;white-space:pre;">6</div>
<div style="position:absolute;left:-661px;width:1000px;text-align:right;top:1877.30px;font-family:'Liberation Mono', monospace;font-size:28.33px;line-height:28.33px;color:#7cbdf2;white-space:pre;">7</div>
<div style="position:absolute;left:-661px;width:1000px;text-align:right;top:1917.30px;font-family:'Liberation Mono', monospace;font-size:28.33px;line-height:28.33px;color:#7cbdf2;white-space:pre;">8</div>
<div style="position:absolute;left:-661px;width:1000px;text-align:right;top:1957.30px;font-family:'Liberation Mono', monospace;font-size:28.33px;line-height:28.33px;color:#7cbdf2;white-space:pre;">9</div>
<div style="position:absolute;left:-661px;width:1000px;text-align:right;top:1997.30px;font-family:'Liberation Mono', monospace;font-size:28.33px;line-height:28.33px;color:#7cbdf2;white-space:pre;">10</div>
<div style="position:absolute;left:-661px;width:1000px;text-align:right;top:2037.30px;font-family:'Liberation Mono', monospace;font-size:28.33px;line-height:28.33px;color:#7cbdf2;white-space:pre;">11</div>
<div style="position:absolute;left:-661px;width:1000px;text-align:right;top:2077.30px;font-family:'Liberation Mono', monospace;font-size:28.33px;line-height:28.33px;color:#7cbdf2;white-space:pre;">12</div>
<div style="position:absolute;left:-661px;width:1000px;text-align:right;top:2117.30px;font-family:'Liberation Mono', monospace;font-size:28.33px;line-height:28.33px;color:#7cbdf2;white-space:pre;">13</div>
<div style="position:absolute;left:-661px;width:1000px;text-align:right;top:2157.30px;font-family:'Liberation Mono', monospace;font-size:28.33px;line-height:28.33px;color:#7cbdf2;white-space:pre;">14</div>
<div style="position:absolute;left:-661px;width:1000px;text-align:right;top:2197.30px;font-family:'Liberation Mono', monospace;font-size:28.33px;line-height:28.33px;color:#7cbdf2;white-space:pre;">15</div>
<div style="position:absolute;left:-661px;width:1000px;text-align:right;top:2237.30px;font-family:'Liberation Mono', monospace;font-size:28.33px;line-height:28.33px;color:#7cbdf2;white-space:pre;">16</div>
<div style="position:absolute;left:-661px;width:1000px;text-align:right;top:2277.30px;font-family:'Liberation Mono', monospace;font-size:28.33px;line-height:28.33px;color:#7cbdf2;white-space:pre;">17</div>
<div style="position:absolute;left:-661px;width:1000px;text-align:right;top:2317.30px;font-family:'Liberation Mono', monospace;font-size:28.33px;line-height:28.33px;color:#7cbdf2;white-space:pre;">18</div>
<div style="position:absolute;left:-661px;width:1000px;text-align:right;top:2357.30px;font-family:'Liberation Mono', monospace;font-size:28.33px;line-height:28.33px;color:#7cbdf2;white-space:pre;">19</div>
<div style="position:absolute;left:-661px;width:1000px;text-align:right;top:2397.30px;font-family:'Liberation Mono', monospace;font-size:28.33px;line-height:28.33px;color:#7cbdf2;white-space:pre;">20</div>
<div style="position:absolute;left:-661px;width:1000px;text-align:right;top:2437.30px;font-family:'Liberation Mono', monospace;font-size:28.33px;line-height:28.33px;color:#7cbdf2;white-space:pre;">21</div>
<div style="position:absolute;left:357px;top:1589px;width:187px;height:880px;background-image:radial-gradient(circle at 8.3px 27.25px,#8f8f8f 0px,#8f8f8f 1.7px,rgba(143,143,143,0) 2.6px);background-size:17px 40px;"></div>
<div style="position:absolute;left:545px;top:1589px;width:187px;height:880px;background-image:radial-gradient(circle at 8.3px 27.25px,#8f8f8f 0px,#8f8f8f 1.7px,rgba(143,143,143,0) 2.6px);background-size:17px 40px;"></div>
<div style="position:absolute;left:733px;top:1589px;width:187px;height:880px;background-image:radial-gradient(circle at 8.3px 27.25px,#8f8f8f 0px,#8f8f8f 1.7px,rgba(143,143,143,0) 2.6px);background-size:17px 40px;"></div>
<div style="position:absolute;left:921px;top:1589px;width:187px;height:880px;background-image:radial-gradient(circle at 8.3px 27.25px,#8f8f8f 0px,#8f8f8f 1.7px,rgba(143,143,143,0) 2.6px);background-size:17px 40px;"></div>
<div style="position:absolute;left:1109px;top:1589px;width:187px;height:880px;background-image:radial-gradient(circle at 8.3px 27.25px,#8f8f8f 0px,#8f8f8f 1.7px,rgba(143,143,143,0) 2.6px);background-size:17px 40px;"></div>
<div style="position:absolute;left:1297px;top:1589px;width:187px;height:880px;background-image:radial-gradient(circle at 8.3px 27.25px,#8f8f8f 0px,#8f8f8f 1.7px,rgba(143,143,143,0) 2.6px);background-size:17px 40px;"></div>
<div style="position:absolute;left:1485px;top:1589px;width:187px;height:880px;background-image:radial-gradient(circle at 8.3px 27.25px,#8f8f8f 0px,#8f8f8f 1.7px,rgba(143,143,143,0) 2.6px);background-size:17px 40px;"></div>
<div style="position:absolute;left:1673px;top:1589px;width:187px;height:880px;background-image:radial-gradient(circle at 8.3px 27.25px,#8f8f8f 0px,#8f8f8f 1.7px,rgba(143,143,143,0) 2.6px);background-size:17px 40px;"></div>
<div style="position:absolute;left:1861px;top:1589px;width:187px;height:880px;background-image:radial-gradient(circle at 8.3px 27.25px,#8f8f8f 0px,#8f8f8f 1.7px,rgba(143,143,143,0) 2.6px);background-size:17px 40px;"></div>
<div style="position:absolute;left:2049px;top:1589px;width:187px;height:880px;background-image:radial-gradient(circle at 8.3px 27.25px,#8f8f8f 0px,#8f8f8f 1.7px,rgba(143,143,143,0) 2.6px);background-size:17px 40px;"></div>
</div>
<div style="position:absolute;left:3486px;top:775px;width:642px;height:47px;background:#0b0b0b;"></div>
<div style="position:absolute;left:3486px;top:821px;width:642px;height:1.5px;background:#1d4f86;"></div>
<div style="position:absolute;left:3539px;top:776px;width:183.5px;height:46px;background:#18497f;border-radius:9px 9px 0 0;"></div>
<div style="position:absolute;left:3547px;top:788.05px;font-family:'Liberation Sans', sans-serif;font-size:27px;line-height:27px;color:#fcfcfc;white-space:pre;letter-spacing:0.45px;">Effect List</div>
<svg style="position:absolute;left:4087px;top:786px;" width="26" height="26" viewBox="0 0 26 26"><path d="M1 1L25 25M25 1L1 25" stroke="#f0f0f0" stroke-width="1.6"/></svg>
<svg style="position:absolute;left:3502px;top:786px;" width="24" height="26" viewBox="0 0 24 26"><rect x="0" y="0" width="22" height="4" fill="#fff"/><path d="M0 8h22L11 24z" fill="#fff"/></svg>
<div style="position:absolute;left:3457.5px;top:779px;width:21.5px;height:661px;background:#525252;border-radius:11px;"></div>
<div style="position:absolute;left:4102px;top:826px;width:21.5px;height:546px;background:#525252;border-radius:11px;"></div>
<div style="position:absolute;left:3502px;top:845.05px;font-family:'Liberation Sans', sans-serif;font-size:27px;line-height:27px;color:#fcfcfc;white-space:pre;letter-spacing:0.45px;">Chip at cursor: Yamaha YM2612 (OPN2)</div>
<div style="position:absolute;left:3502px;top:883px;width:416px;height:47px;background:#192942;border-radius:11px;"></div>
<div style="position:absolute;left:3928px;top:895.55px;font-family:'Liberation Sans', sans-serif;font-size:27px;line-height:27px;color:#fcfcfc;white-space:pre;letter-spacing:0.45px;">Search</div>
<div style="position:absolute;left:4029.5px;top:883px;width:46.5px;height:47px;background:#173559;border-radius:11px;"></div>
<svg style="position:absolute;left:4029.5px;top:883px;" width="47" height="47" viewBox="0 0 47 47"><rect x="10" y="12" width="27" height="4.5" rx="1" fill="#fff"/><rect x="10" y="21.3" width="27" height="4.5" rx="1" fill="#fff"/><rect x="10" y="30.6" width="27" height="4.5" rx="1" fill="#fff"/></svg>
<div style="position:absolute;left:3502px;top:939px;width:581.5px;height:44px;background:#313134;"></div>
<div style="position:absolute;left:3502px;top:950.05px;font-family:'Liberation Sans', sans-serif;font-size:27px;line-height:27px;color:#fcfcfc;white-space:pre;letter-spacing:0.45px;">Name</div>
<div style="position:absolute;left:3586.5px;top:950.05px;font-family:'Liberation Sans', sans-serif;font-size:27px;line-height:27px;color:#fcfcfc;white-space:pre;letter-spacing:0.45px;">Description</div>
<div style="position:absolute;left:0;top:0;width:4416px;height:2448px;overflow:hidden;">
<div style="position:absolute;left:3502px;top:994.30px;font-family:'Liberation Mono', monospace;font-size:28.33px;line-height:28.33px;color:#5a5aff;white-space:pre;">00xy</div>
<div style="position:absolute;left:3586.5px;top:993.05px;font-family:'Liberation Sans', sans-serif;font-size:27px;line-height:27px;color:#fcfcfc;white-space:pre;letter-spacing:0.45px;">Arpeggio</div>
<div style="position:absolute;left:3502px;top:1038.20px;font-family:'Liberation Mono', monospace;font-size:28.33px;line-height:28.33px;color:#ffff00;white-space:pre;">01xx</div>
<div style="position:absolute;left:3586.5px;top:1036.95px;font-family:'Liberation Sans', sans-serif;font-size:27px;line-height:27px;color:#fcfcfc;white-space:pre;letter-spacing:0.45px;">Pitch slide up</div>
<div style="position:absolute;left:3502px;top:1082.10px;font-family:'Liberation Mono', monospace;font-size:28.33px;line-height:28.33px;color:#ffff00;white-space:pre;">02xx</div>
<div style="position:absolute;left:3586.5px;top:1080.85px;font-family:'Liberation Sans', sans-serif;font-size:27px;line-height:27px;color:#fcfcfc;white-space:pre;letter-spacing:0.45px;">Pitch slide down</div>
<div style="position:absolute;left:3502px;top:1126.00px;font-family:'Liberation Mono', monospace;font-size:28.33px;line-height:28.33px;color:#ffff00;white-space:pre;">03xx</div>
<div style="position:absolute;left:3586.5px;top:1124.75px;font-family:'Liberation Sans', sans-serif;font-size:27px;line-height:27px;color:#fcfcfc;white-space:pre;letter-spacing:0.45px;">Portamento</div>
<div style="position:absolute;left:3502px;top:1169.90px;font-family:'Liberation Mono', monospace;font-size:28.33px;line-height:28.33px;color:#ffff00;white-space:pre;">04xy</div>
<div style="position:absolute;left:3586.5px;top:1168.65px;font-family:'Liberation Sans', sans-serif;font-size:27px;line-height:27px;color:#fcfcfc;white-space:pre;letter-spacing:0.45px;">Vibrato (x: speed; y: depth)</div>
<div style="position:absolute;left:3502px;top:1213.80px;font-family:'Liberation Mono', monospace;font-size:28.33px;line-height:28.33px;color:#00ff00;white-space:pre;">05xy</div>
<div style="position:absolute;left:3586.5px;top:1212.55px;font-family:'Liberation Sans', sans-serif;font-size:27px;line-height:27px;color:#fcfcfc;white-space:pre;letter-spacing:0.45px;">Volume slide + vibrato (compatibility</div>
<div style="position:absolute;left:3586.5px;top:1248.85px;font-family:'Liberation Sans', sans-serif;font-size:27px;line-height:27px;color:#fcfcfc;white-space:pre;letter-spacing:0.45px;">only!)</div>
<div style="position:absolute;left:3502px;top:1294.00px;font-family:'Liberation Mono', monospace;font-size:28.33px;line-height:28.33px;color:#00ff00;white-space:pre;">06xy</div>
<div style="position:absolute;left:3586.5px;top:1292.75px;font-family:'Liberation Sans', sans-serif;font-size:27px;line-height:27px;color:#fcfcfc;white-space:pre;letter-spacing:0.45px;">Volume slide + portamento</div>
<div style="position:absolute;left:3586.5px;top:1329.05px;font-family:'Liberation Sans', sans-serif;font-size:27px;line-height:27px;color:#fcfcfc;white-space:pre;letter-spacing:0.45px;">(compatibility only!)</div>
<div style="position:absolute;left:3502px;top:1374.20px;font-family:'Liberation Mono', monospace;font-size:28.33px;line-height:28.33px;color:#00ff00;white-space:pre;">07xy</div>
<div style="position:absolute;left:3586.5px;top:1372.95px;font-family:'Liberation Sans', sans-serif;font-size:27px;line-height:27px;color:#fcfcfc;white-space:pre;letter-spacing:0.45px;">Tremolo (x: speed; y: depth)</div>
<div style="position:absolute;left:3502px;top:1418.10px;font-family:'Liberation Mono', monospace;font-size:28.33px;line-height:28.33px;color:#00ffff;white-space:pre;">08xy</div>
<div style="position:absolute;left:3586.5px;top:1416.85px;font-family:'Liberation Sans', sans-serif;font-size:27px;line-height:27px;color:#fcfcfc;white-space:pre;letter-spacing:0.45px;">Set panning (x: left; y: right)</div>
<div style="position:absolute;left:3502px;top:1462.00px;font-family:'Liberation Mono', monospace;font-size:28.33px;line-height:28.33px;color:#ff00ff;white-space:pre;">09xx</div>
<div style="position:absolute;left:3586.5px;top:1460.75px;font-family:'Liberation Sans', sans-serif;font-size:27px;line-height:27px;color:#fcfcfc;white-space:pre;letter-spacing:0.45px;">Set groove pattern (speed 1 if no</div>
<div style="position:absolute;left:3586.5px;top:1497.05px;font-family:'Liberation Sans', sans-serif;font-size:27px;line-height:27px;color:#fcfcfc;white-space:pre;letter-spacing:0.45px;">grooves exist)</div>
<div style="position:absolute;left:3502px;top:1542.20px;font-family:'Liberation Mono', monospace;font-size:28.33px;line-height:28.33px;color:#00ff00;white-space:pre;">0Axy</div>
<div style="position:absolute;left:3586.5px;top:1540.95px;font-family:'Liberation Sans', sans-serif;font-size:27px;line-height:27px;color:#fcfcfc;white-space:pre;letter-spacing:0.45px;">Volume slide (0y: down; x0: up)</div>
<div style="position:absolute;left:3502px;top:1586.10px;font-family:'Liberation Mono', monospace;font-size:28.33px;line-height:28.33px;color:#ff0000;white-space:pre;">0Bxx</div>
<div style="position:absolute;left:3586.5px;top:1584.85px;font-family:'Liberation Sans', sans-serif;font-size:27px;line-height:27px;color:#fcfcfc;white-space:pre;letter-spacing:0.45px;">Jump to pattern</div>
<div style="position:absolute;left:3502px;top:1630.00px;font-family:'Liberation Mono', monospace;font-size:28.33px;line-height:28.33px;color:#8000ff;white-space:pre;">0Cxx</div>
<div style="position:absolute;left:3586.5px;top:1628.75px;font-family:'Liberation Sans', sans-serif;font-size:27px;line-height:27px;color:#fcfcfc;white-space:pre;letter-spacing:0.45px;">Retrigger</div>
<div style="position:absolute;left:3502px;top:1673.90px;font-family:'Liberation Mono', monospace;font-size:28.33px;line-height:28.33px;color:#ff0000;white-space:pre;">0Dxx</div>
<div style="position:absolute;left:3586.5px;top:1672.65px;font-family:'Liberation Sans', sans-serif;font-size:27px;line-height:27px;color:#fcfcfc;white-space:pre;letter-spacing:0.45px;">Jump to next pattern</div>
<div style="position:absolute;left:3502px;top:1717.80px;font-family:'Liberation Mono', monospace;font-size:28.33px;line-height:28.33px;color:#ff00ff;white-space:pre;">0Fxx</div>
<div style="position:absolute;left:3586.5px;top:1716.55px;font-family:'Liberation Sans', sans-serif;font-size:27px;line-height:27px;color:#fcfcfc;white-space:pre;letter-spacing:0.45px;">Set speed (speed 2 if no grooves exist)</div>
<div style="position:absolute;left:3502px;top:1761.70px;font-family:'Liberation Mono', monospace;font-size:28.33px;line-height:28.33px;color:#80ff00;white-space:pre;">10xy</div>
<div style="position:absolute;left:3586.5px;top:1760.45px;font-family:'Liberation Sans', sans-serif;font-size:27px;line-height:27px;color:#fcfcfc;white-space:pre;letter-spacing:0.45px;">Setup LFO (x: enable; y: speed)</div>
<div style="position:absolute;left:3502px;top:1805.60px;font-family:'Liberation Mono', monospace;font-size:28.33px;line-height:28.33px;color:#80ff00;white-space:pre;">11xx</div>
<div style="position:absolute;left:3586.5px;top:1804.35px;font-family:'Liberation Sans', sans-serif;font-size:27px;line-height:27px;color:#fcfcfc;white-space:pre;letter-spacing:0.45px;">Set feedback (0 to 7)</div>
<div style="position:absolute;left:3502px;top:1849.50px;font-family:'Liberation Mono', monospace;font-size:28.33px;line-height:28.33px;color:#80ff00;white-space:pre;">12xx</div>
<div style="position:absolute;left:3586.5px;top:1848.25px;font-family:'Liberation Sans', sans-serif;font-size:27px;line-height:27px;color:#fcfcfc;white-space:pre;letter-spacing:0.45px;">Set level of operator 1 (0 highest, 7F</div>
<div style="position:absolute;left:3586.5px;top:1884.55px;font-family:'Liberation Sans', sans-serif;font-size:27px;line-height:27px;color:#fcfcfc;white-space:pre;letter-spacing:0.45px;">lowest)</div>
<div style="position:absolute;left:3502px;top:1929.70px;font-family:'Liberation Mono', monospace;font-size:28.33px;line-height:28.33px;color:#80ff00;white-space:pre;">13xx</div>
<div style="position:absolute;left:3586.5px;top:1928.45px;font-family:'Liberation Sans', sans-serif;font-size:27px;line-height:27px;color:#fcfcfc;white-space:pre;letter-spacing:0.45px;">Set level of operator 2 (0 highest, 7F</div>
<div style="position:absolute;left:3586.5px;top:1964.75px;font-family:'Liberation Sans', sans-serif;font-size:27px;line-height:27px;color:#fcfcfc;white-space:pre;letter-spacing:0.45px;">lowest)</div>
<div style="position:absolute;left:3502px;top:2009.90px;font-family:'Liberation Mono', monospace;font-size:28.33px;line-height:28.33px;color:#80ff00;white-space:pre;">14xx</div>
<div style="position:absolute;left:3586.5px;top:2008.65px;font-family:'Liberation Sans', sans-serif;font-size:27px;line-height:27px;color:#fcfcfc;white-space:pre;letter-spacing:0.45px;">Set level of operator 3 (0 highest, 7F</div>
<div style="position:absolute;left:3586.5px;top:2044.95px;font-family:'Liberation Sans', sans-serif;font-size:27px;line-height:27px;color:#fcfcfc;white-space:pre;letter-spacing:0.45px;">lowest)</div>
<div style="position:absolute;left:3502px;top:2090.10px;font-family:'Liberation Mono', monospace;font-size:28.33px;line-height:28.33px;color:#80ff00;white-space:pre;">15xx</div>
<div style="position:absolute;left:3586.5px;top:2088.85px;font-family:'Liberation Sans', sans-serif;font-size:27px;line-height:27px;color:#fcfcfc;white-space:pre;letter-spacing:0.45px;">Set level of operator 4 (0 highest, 7F</div>
<div style="position:absolute;left:3586.5px;top:2125.15px;font-family:'Liberation Sans', sans-serif;font-size:27px;line-height:27px;color:#fcfcfc;white-space:pre;letter-spacing:0.45px;">lowest)</div>
<div style="position:absolute;left:3502px;top:2170.30px;font-family:'Liberation Mono', monospace;font-size:28.33px;line-height:28.33px;color:#80ff00;white-space:pre;">16xy</div>
<div style="position:absolute;left:3586.5px;top:2169.05px;font-family:'Liberation Sans', sans-serif;font-size:27px;line-height:27px;color:#fcfcfc;white-space:pre;letter-spacing:0.45px;">Set operator multiplier (x: operator</div>
<div style="position:absolute;left:3586.5px;top:2205.35px;font-family:'Liberation Sans', sans-serif;font-size:27px;line-height:27px;color:#fcfcfc;white-space:pre;letter-spacing:0.45px;">from 1 to 4; y: multiplier)</div>
<div style="position:absolute;left:3502px;top:2250.50px;font-family:'Liberation Mono', monospace;font-size:28.33px;line-height:28.33px;color:#80ff00;white-space:pre;">17xx</div>
<div style="position:absolute;left:3586.5px;top:2249.25px;font-family:'Liberation Sans', sans-serif;font-size:27px;line-height:27px;color:#fcfcfc;white-space:pre;letter-spacing:0.45px;">Toggle PCM mode (LEGACY)</div>
<div style="position:absolute;left:3502px;top:2294.40px;font-family:'Liberation Mono', monospace;font-size:28.33px;line-height:28.33px;color:#80ff00;white-space:pre;">19xx</div>
<div style="position:absolute;left:3586.5px;top:2293.15px;font-family:'Liberation Sans', sans-serif;font-size:27px;line-height:27px;color:#fcfcfc;white-space:pre;letter-spacing:0.45px;">Set attack of all operators (0 to 1F)</div>
<div style="position:absolute;left:3502px;top:2338.30px;font-family:'Liberation Mono', monospace;font-size:28.33px;line-height:28.33px;color:#80ff00;white-space:pre;">1Axx</div>
<div style="position:absolute;left:3586.5px;top:2337.05px;font-family:'Liberation Sans', sans-serif;font-size:27px;line-height:27px;color:#fcfcfc;white-space:pre;letter-spacing:0.45px;">Set attack of operator 1 (0 to 1F)</div>
<div style="position:absolute;left:3502px;top:2382.20px;font-family:'Liberation Mono', monospace;font-size:28.33px;line-height:28.33px;color:#80ff00;white-space:pre;">1Bxx</div>
<div style="position:absolute;left:3586.5px;top:2380.95px;font-family:'Liberation Sans', sans-serif;font-size:27px;line-height:27px;color:#fcfcfc;white-space:pre;letter-spacing:0.45px;">Set attack of operator 2 (0 to 1F)</div>
<div style="position:absolute;left:3502px;top:2426.10px;font-family:'Liberation Mono', monospace;font-size:28.33px;line-height:28.33px;color:#80ff00;white-space:pre;">1Cxx</div>
<div style="position:absolute;left:3586.5px;top:2424.85px;font-family:'Liberation Sans', sans-serif;font-size:27px;line-height:27px;color:#fcfcfc;white-space:pre;letter-spacing:0.45px;">Set attack of operator 3 (0 to 1F)</div>
</div>
<div style="position:absolute;left:2793px;top:911px;width:480px;height:525px;box-sizing:border-box;border:1px solid #35353d;border-radius:12px;background:#000;overflow:hidden;"><div style="position:absolute;left:0;top:0;width:480px;height:47.5px;background:#17375c;"></div></div>
<svg style="position:absolute;left:2809px;top:922px;" width="26" height="24" viewBox="0 0 26 24"><path d="M1 1h24L13 22z" fill="#fff"/></svg>
<div style="position:absolute;left:2847px;top:923.55px;font-family:'Liberation Sans', sans-serif;font-size:27px;line-height:27px;color:#fcfcfc;white-space:pre;letter-spacing:0.45px;">Oscilloscope (X-Y)</div>
<svg style="position:absolute;left:3233px;top:922px;" width="26" height="26" viewBox="0 0 26 26"><path d="M1 1L25 25M25 1L1 25" stroke="#f0f0f0" stroke-width="1.6"/></svg>
<div style="position:absolute;left:2811px;top:976px;width:444px;height:443px;box-sizing:border-box;border:3px solid #5b8fe6;border-radius:18px;background:linear-gradient(#1c2c4b,#12223e);"></div>
<svg style="position:absolute;left:2811px;top:976px;" width="444" height="443" viewBox="0 0 444 443"><g stroke="#2a4c7c" stroke-width="1.2" fill="none"><path d="M222 3V440M3 221.5H441"/><rect x="56.5" y="56.5" width="331" height="330"/><rect x="111.5" y="111.5" width="220" height="220"/><rect x="166.5" y="166.5" width="110" height="109"/><path d="M5 438L439 5"/></g></svg>
<svg style="position:absolute;left:3234px;top:1397px;" width="39" height="39" viewBox="0 0 39 39"><path d="M38.5 0V27a12 12 0 0 1 -12 12H0z" fill="#182841"/></svg>
<div style="position:absolute;left:289px;top:1311px;width:84px;height:161px;background:rgba(66,150,250,0.5);border-radius:11px;"></div>
<div style="position:absolute;left:291px;top:1313px;width:80px;height:157px;box-sizing:border-box;border:1px solid rgba(255,255,255,0.55);border-radius:9px;"></div>
<div style="position:absolute;left:331.0px;top:1313px;width:1px;height:157px;background:rgba(255,255,255,0.55);"></div>
<div style="position:absolute;left:4042px;top:1311px;width:86px;height:161px;background:rgba(66,150,250,0.5);border-radius:11px;"></div>
<div style="position:absolute;left:4044px;top:1313px;width:82px;height:157px;box-sizing:border-box;border:1px solid rgba(255,255,255,0.55);border-radius:9px;"></div>
<div style="position:absolute;left:4085.0px;top:1313px;width:1px;height:157px;background:rgba(255,255,255,0.55);"></div>
<div style="position:absolute;left:2128px;top:336px;width:160px;height:85px;background:rgba(66,150,250,0.5);border-radius:11px;"></div>
<div style="position:absolute;left:2130px;top:338px;width:156px;height:81px;box-sizing:border-box;border:1px solid rgba(255,255,255,0.55);border-radius:9px;"></div>
<div style="position:absolute;left:2130px;top:378.5px;width:156px;height:1px;background:rgba(255,255,255,0.55);"></div>
<div style="position:absolute;left:2128px;top:2363px;width:160px;height:84px;background:rgba(66,150,250,0.5);border-radius:11px;"></div>
<div style="position:absolute;left:2130px;top:2365px;width:156px;height:80px;box-sizing:border-box;border:1px solid rgba(255,255,255,0.55);border-radius:9px;"></div>
<div style="position:absolute;left:2130px;top:2405.0px;width:156px;height:1px;background:rgba(255,255,255,0.55);"></div>
<div style="position:absolute;left:1832px;top:1435px;width:106px;height:94px;background:rgba(66,150,250,0.5);border-radius:11px;"></div>
<div style="position:absolute;left:1834px;top:1437px;width:102px;height:90px;box-sizing:border-box;border:1px solid rgba(255,255,255,0.55);border-radius:9px;"></div>
<div style="position:absolute;left:1834px;top:1482.0px;width:102px;height:1px;background:rgba(255,255,255,0.55);"></div>
<div style="position:absolute;left:1832px;top:1558px;width:106px;height:107px;background:rgba(66,150,250,0.5);border-radius:11px;"></div>
<div style="position:absolute;left:1834px;top:1560px;width:102px;height:103px;box-sizing:border-box;border:1px solid rgba(255,255,255,0.55);border-radius:9px;"></div>
<div style="position:absolute;left:1709px;top:1558px;width:94px;height:107px;background:rgba(66,150,250,0.5);border-radius:11px;"></div>
<div style="position:absolute;left:1711px;top:1560px;width:90px;height:103px;box-sizing:border-box;border:1px solid rgba(255,255,255,0.55);border-radius:9px;"></div>
<div style="position:absolute;left:1756.0px;top:1560px;width:1px;height:103px;background:rgba(255,255,255,0.55);"></div>
<div style="position:absolute;left:1967px;top:1558px;width:94.5px;height:107px;background:rgba(66,150,250,0.5);border-radius:11px;"></div>
<div style="position:absolute;left:1969px;top:1560px;width:90.5px;height:103px;box-sizing:border-box;border:1px solid rgba(255,255,255,0.55);border-radius:9px;"></div>
<div style="position:absolute;left:2014.25px;top:1560px;width:1px;height:103px;background:rgba(255,255,255,0.55);"></div>
<div style="position:absolute;left:1832px;top:1693px;width:106px;height:94px;background:rgba(66,150,250,0.5);border-radius:11px;"></div>
<div style="position:absolute;left:1834px;top:1695px;width:102px;height:90px;box-sizing:border-box;border:1px solid rgba(255,255,255,0.55);border-radius:9px;"></div>
<div style="position:absolute;left:1834px;top:1740.0px;width:102px;height:1px;background:rgba(255,255,255,0.55);"></div>
<div style="position:absolute;left:2068px;top:122.95px;font-family:'Liberation Sans', sans-serif;font-size:75px;line-height:75px;color:#fff6b4;white-space:pre;filter:drop-shadow(2px 3px 3px rgba(0,0,0,0.75));">dock top</div>
<div style="position:absolute;left:2204px;top:208px;width:8px;height:134px;background:#fff6b4;box-shadow:2px 3px 5px rgba(0,0,0,0.7);"></div>
<div style="position:absolute;left:2004px;top:2539.75px;font-family:'Liberation Sans', sans-serif;font-size:75px;line-height:75px;color:#fff6b4;white-space:pre;filter:drop-shadow(2px 3px 3px rgba(0,0,0,0.75));">dock bottom</div>
<div style="position:absolute;left:2204px;top:2442px;width:8px;height:87px;background:#fff6b4;box-shadow:2px 3px 5px rgba(0,0,0,0.7);"></div>
<div style="position:absolute;left:1752px;top:1277.25px;font-family:'Liberation Sans', sans-serif;font-size:75px;line-height:75px;color:#fff6b4;white-space:pre;filter:drop-shadow(2px 3px 3px rgba(0,0,0,0.75));">split top</div>
<div style="position:absolute;left:1881px;top:1362px;width:8px;height:78px;background:#fff6b4;box-shadow:2px 3px 5px rgba(0,0,0,0.7);"></div>
<div style="position:absolute;left:1688px;top:1869.25px;font-family:'Liberation Sans', sans-serif;font-size:75px;line-height:75px;color:#fff6b4;white-space:pre;filter:drop-shadow(2px 3px 3px rgba(0,0,0,0.75));">split bottom</div>
<div style="position:absolute;left:1881px;top:1780px;width:8px;height:77px;background:#fff6b4;box-shadow:2px 3px 5px rgba(0,0,0,0.7);"></div>
<div style="position:absolute;left:1436px;top:1423.75px;font-family:'Liberation Sans', sans-serif;font-size:75px;line-height:75px;color:#fff6b4;white-space:pre;filter:drop-shadow(2px 3px 3px rgba(0,0,0,0.75));">make tab</div>
<svg style="position:absolute;left:1745px;top:1470px;filter:drop-shadow(2px 3px 3px rgba(0,0,0,0.75));" width="110" height="110" viewBox="0 0 110 110"><path d="M12 13L93 93" stroke="#fff6b4" stroke-width="8"/></svg>
<div style="position:absolute;left:1349px;top:1573.25px;font-family:'Liberation Sans', sans-serif;font-size:75px;line-height:75px;color:#fff6b4;white-space:pre;filter:drop-shadow(2px 3px 3px rgba(0,0,0,0.75));">split left</div>
<div style="position:absolute;left:1638px;top:1606px;width:76px;height:9px;background:#fff6b4;box-shadow:2px 3px 5px rgba(0,0,0,0.7);"></div>
<div style="position:absolute;left:2156px;top:1573.25px;font-family:'Liberation Sans', sans-serif;font-size:75px;line-height:75px;color:#fff6b4;white-space:pre;filter:drop-shadow(2px 3px 3px rgba(0,0,0,0.75));">split right</div>
<div style="position:absolute;left:2055px;top:1606px;width:78px;height:9px;background:#fff6b4;box-shadow:2px 3px 5px rgba(0,0,0,0.7);"></div>
<div style="position:absolute;left:125.25px;top:1533px;transform-origin:0 0;transform:rotate(-90deg);font-family:'Liberation Sans', sans-serif;font-size:75px;line-height:75px;color:#fff6b4;white-space:pre;filter:drop-shadow(2px 3px 3px rgba(0,0,0,0.75));">dock left</div>
<div style="position:absolute;left:208px;top:1387px;width:86px;height:9px;background:#fff6b4;box-shadow:2px 3px 5px rgba(0,0,0,0.7);"></div>
<div style="position:absolute;left:4292.5px;top:1231px;transform-origin:0 0;transform:rotate(90deg);font-family:'Liberation Sans', sans-serif;font-size:75px;line-height:75px;color:#fff6b4;white-space:pre;filter:drop-shadow(2px 3px 3px rgba(0,0,0,0.75));">dock right</div>
<div style="position:absolute;left:4122px;top:1387px;width:86px;height:9px;background:#fff6b4;box-shadow:2px 3px 5px rgba(0,0,0,0.7);"></div>
</div></body></html>
